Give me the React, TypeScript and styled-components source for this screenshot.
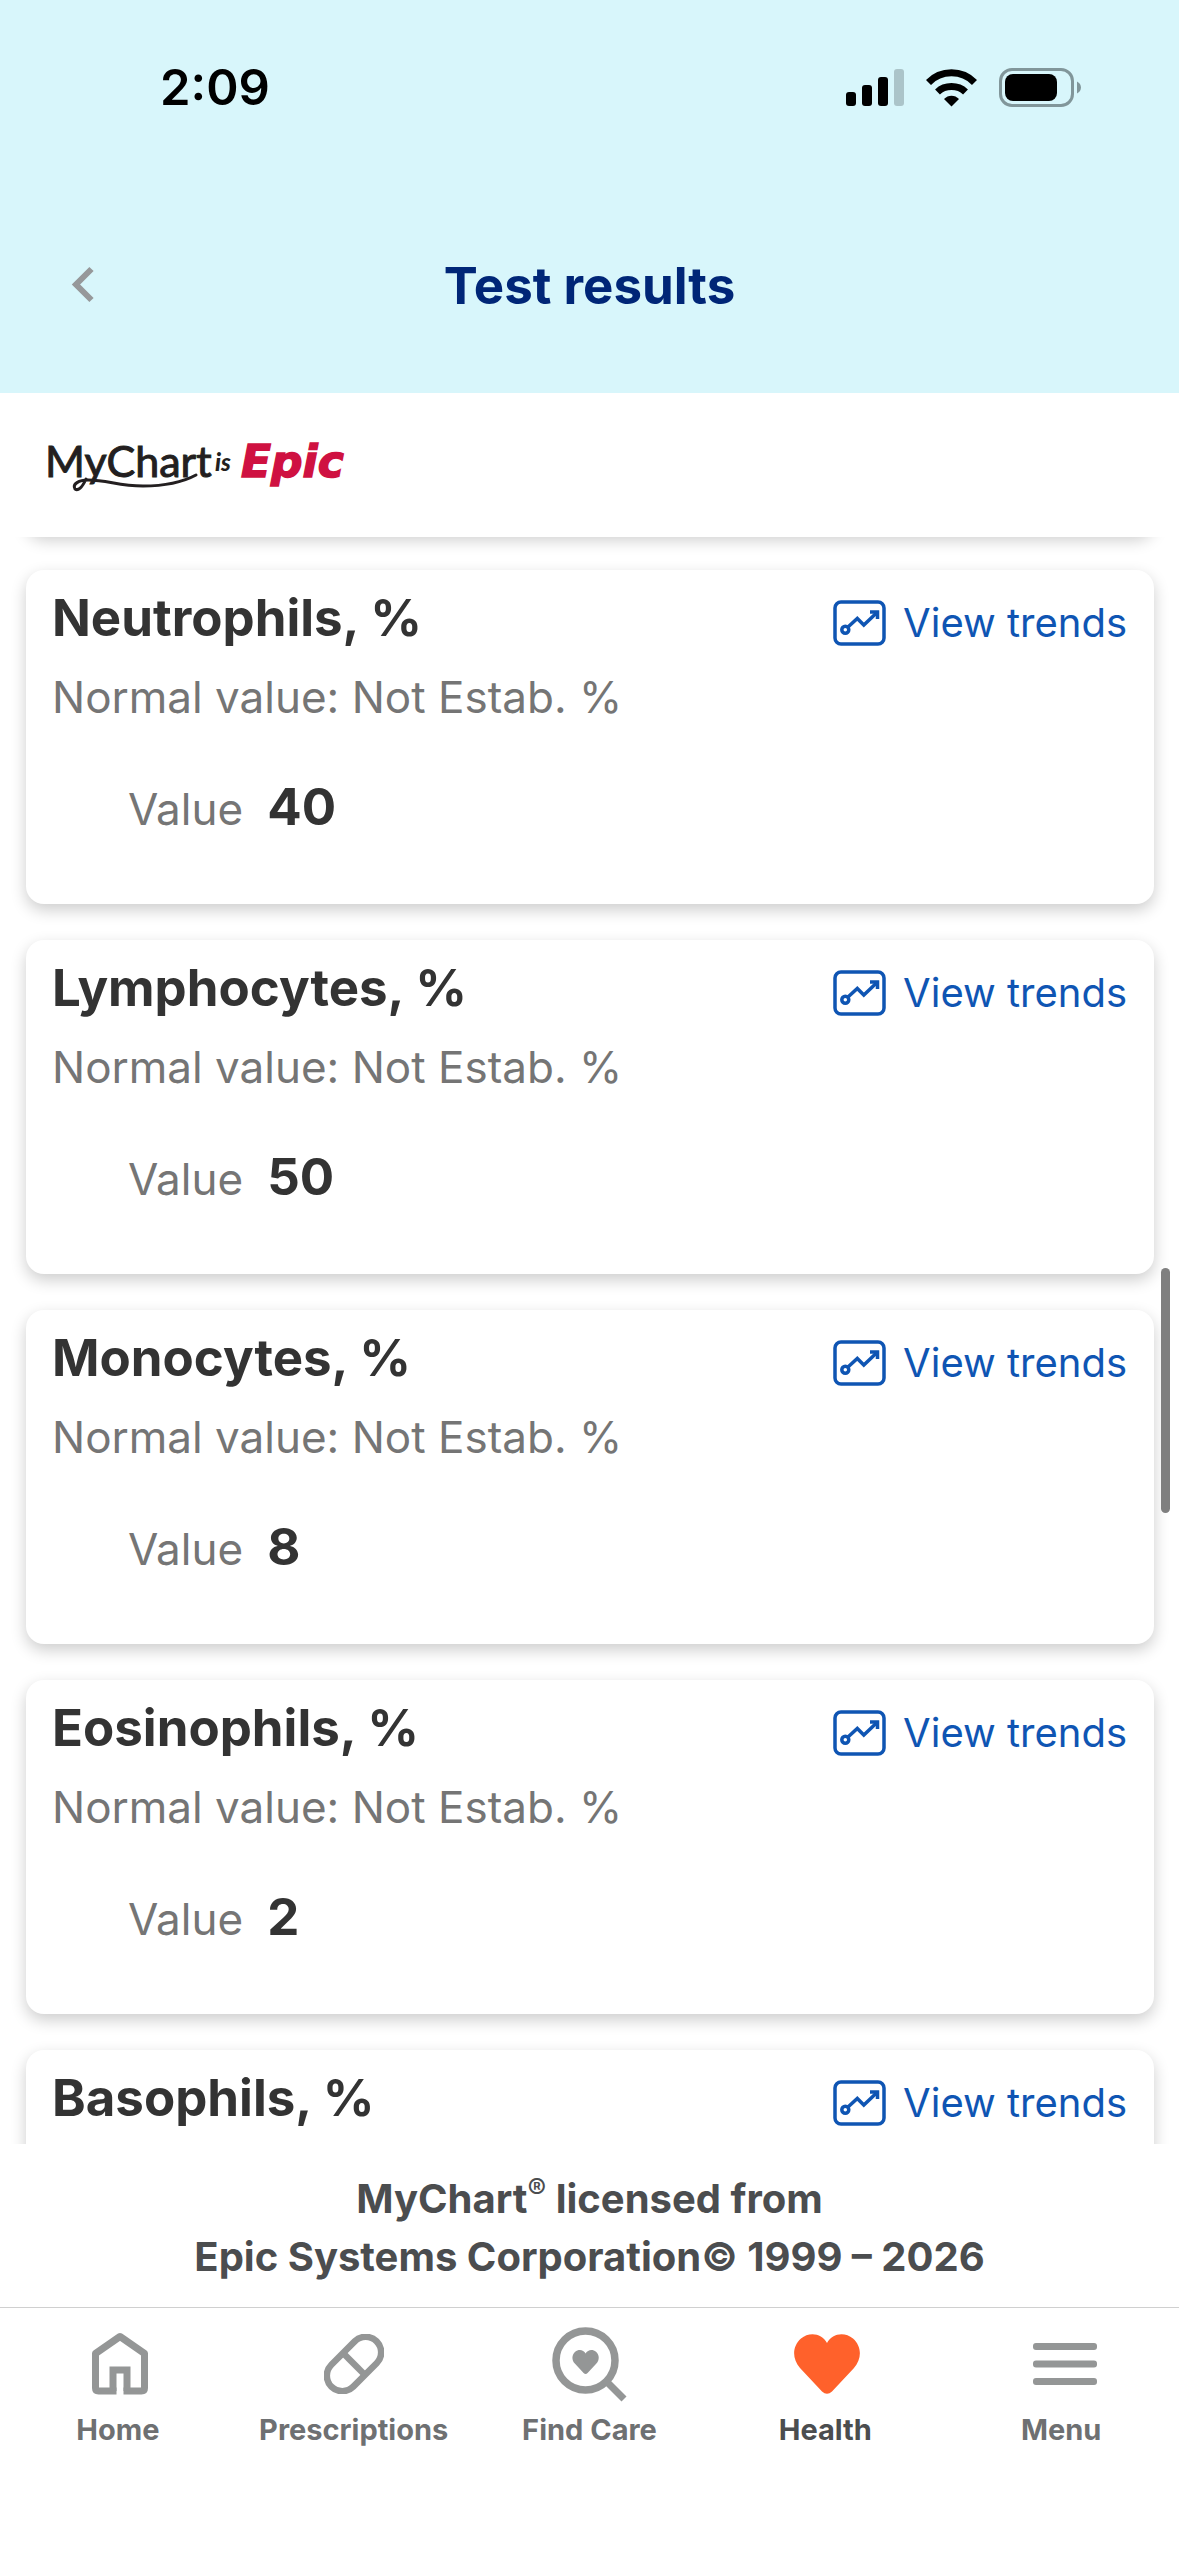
import React from 'react';
import styled, { createGlobalStyle } from 'styled-components';

const GlobalStyle = createGlobalStyle`
  *, *::before, *::after { box-sizing: border-box; }
  html, body, #root { height: 100%; }
  body { margin: 0; background: #fff; font-family: Inter, "Liberation Sans", sans-serif; }
  h1, h2, p, dl, dt, dd, ul { margin: 0; padding: 0; }
  button { border: 0; padding: 0; background: none; font: inherit; color: inherit; }
  a { color: inherit; text-decoration: none; }
  svg { display: block; flex: none; }
`;

const Screen = styled.div`
  display: flex;
  flex-direction: column;
  height: 100vh;
  overflow: hidden;
`;

const Header = styled.header`
  flex: none;
  background: #d8f6fb;
`;

const StatusBar = styled.div`
  display: flex;
  align-items: center;
  justify-content: space-between;
  height: 176px;
  padding: 0 97px 0 160px;
`;

const Time = styled.span`
  font-size: 49px;
  line-height: 60px;
  font-weight: 600;
  color: #000;
`;

const StatusIcons = styled.div`
  display: flex;
  align-items: center;
  gap: 22px;
`;

const TitleBar = styled.div`
  display: grid;
  grid-template-columns: 120px 1fr 120px;
  align-items: center;
  height: 217px;
`;

const BackButton = styled.button`
  display: flex;
  padding-left: 70px;
`;

const Title = styled.h1`
  padding-top: 2px;
  font-size: 51px;
  line-height: 60px;
  font-weight: 700;
  color: #002677;
  text-align: center;
`;

const BrandBar = styled.div`
  flex: none;
  display: flex;
  align-items: center;
  height: 144px;
  padding-left: 46px;
`;

const Results = styled.main`
  position: relative;
  flex: 1;
  min-height: 0;
  overflow: hidden;
`;

const CardList = styled.ul`
  display: flex;
  flex-direction: column;
  gap: 36px;
  margin-top: -337px;
  padding: 0 25px 0 26px;
  list-style: none;
`;

const Card = styled.li`
  height: 334px;
  flex: none;
  padding: 18px 27px 18px 26px;
  border-radius: 18px;
  background: #fff;
  box-shadow: 0 6px 16px rgba(0, 0, 0, 0.2);
`;

const CardHead = styled.div`
  display: flex;
  align-items: flex-start;
  justify-content: space-between;
`;

const TestName = styled.h2`
  font-size: 51px;
  line-height: 60px;
  font-weight: 700;
  color: #333;
`;

const TrendsLink = styled.a`
  display: flex;
  align-items: center;
  gap: 17px;
  font-size: 40px;
  line-height: 70px;
  color: #0f55b3;
`;

const NormalRange = styled.p`
  margin-top: 9px;
  font-size: 44px;
  line-height: 60px;
  color: #757575;
`;

const Reading = styled.dl`
  display: flex;
  align-items: baseline;
  gap: 24px;
  margin-top: 50px;
  padding-left: 76px;
`;

const ReadingLabel = styled.dt`
  font-size: 44px;
  line-height: 60px;
  color: #757575;
`;

const ReadingValue = styled.dd`
  font-size: 51px;
  line-height: 60px;
  font-weight: 700;
  color: #333;
`;

const ScrollThumb = styled.div`
  position: absolute;
  top: 731px;
  right: 9px;
  width: 9px;
  height: 245px;
  border-radius: 5px;
  background: #7f7f7f;
`;

const Licence = styled.footer`
  flex: none;
  height: 164px;
  padding-top: 26px;
  border-bottom: 1px solid #d0d0d0;
  text-align: center;
  font-size: 40px;
  line-height: 58px;
  font-weight: 700;
  color: #4b4d4f;
`;

const Registered = styled.sup`
  font-size: 28px;
  line-height: 0;
  font-weight: 500;
`;

const TabBar = styled.nav`
  flex: none;
  display: grid;
  grid-template-columns: repeat(5, 1fr);
  height: 248px;
  padding-top: 17px;
`;

const Tab = styled.a<{ $active?: boolean }>`
  display: flex;
  flex-direction: column;
  align-items: center;
  font-size: 29px;
  line-height: 40px;
  font-weight: 700;
  color: ${({ $active }) => ($active ? '#4b4d4f' : '#6e7072')};
`;

const TabIcon = styled.span`
  display: flex;
  align-items: center;
  justify-content: center;
  height: 78px;
  margin-bottom: 7px;
`;

const SignalIcon = () => (
  <svg width="58" height="38" viewBox="0 0 58 38" aria-hidden="true">
    <rect x="0" y="23" width="10" height="14" rx="3" />
    <rect x="16" y="16" width="10" height="21" rx="3" />
    <rect x="32" y="8" width="10" height="29" rx="3" />
    <rect x="48" y="0" width="10" height="37" rx="3" fill="#abc4c9" />
  </svg>
);

const WifiIcon = () => (
  <svg width="51" height="38" viewBox="0 0 51 38" aria-hidden="true">
    <path d="M25.500 37.500L18 30C22 25.500 29 25.500 33 30Z" />
    <path d="M11.500 23C19 15.800 32 15.800 39.500 23" fill="none" stroke="#000" strokeWidth="7" />
    <path d="M2.500 13.500C15 .600 36 .600 48.500 13.500" fill="none" stroke="#000" strokeWidth="7" />
  </svg>
);

const BatteryIcon = () => (
  <svg width="83" height="40" viewBox="0 0 83 40" aria-hidden="true">
    <rect x="1.500" y="1.500" width="72" height="36" rx="11.500" fill="none" stroke="#81969a" strokeWidth="3" />
    <rect x="6" y="6" width="52" height="27" rx="8" />
    <path d="M78 13.500C83.300 16 83.300 23 78 25.500Z" fill="#81969a" />
  </svg>
);

const ChevronIcon = () => (
  <svg width="26" height="38" viewBox="0 0 26 38" fill="none" aria-hidden="true">
    <path d="M21.500 3L6 18.500L21.500 34" stroke="#96989a" strokeWidth="6" />
  </svg>
);

const BrandLogo = () => (
  <svg width="310" height="60" viewBox="0 0 310 60" role="img" aria-label="MyChart is Epic">
    <text x="-1" y="42" fontFamily="Lato, sans-serif" fontSize="43" fill="#231f20" stroke="#231f20" strokeWidth="1">
      MyChart
    </text>
    <path
      d="M40 44C36 53 32 56 29 54C26 49 33 45 42 45C62 45 72 51 97 51C120 51 137 47 150 40"
      fill="none"
      stroke="#231f20"
      strokeWidth="3"
      strokeLinecap="round"
    />
    <text x="169" y="36" fontFamily="Lato, sans-serif" fontSize="24" fontWeight="900" fontStyle="italic" fill="#231f20">
      is
    </text>
    <text
      x="195"
      y="42"
      fontFamily="DejaVu Sans, sans-serif"
      fontSize="44"
      fontWeight="700"
      fontStyle="italic"
      fill="#cf1141"
      stroke="#cf1141"
      strokeWidth="1.500"
    >
      Epic
    </text>
  </svg>
);

const TrendIcon = () => (
  <svg width="53" height="46" viewBox="0 0 53 46" fill="none" stroke="#0f55b3" strokeWidth="3.500" aria-hidden="true">
    <rect x="2" y="2" width="49" height="42" rx="6" />
    <circle cx="12.300" cy="29.700" r="3.500" />
    <path d="M15 27L24.300 18.500L30.800 25L43.500 13" />
    <path d="M37 12H44.500V19" />
  </svg>
);

const HomeIcon = () => (
  <svg width="62" height="64" viewBox="-4 0 62 64" fill="none" stroke="#949696" strokeWidth="7" strokeLinejoin="round" aria-hidden="true">
    <path d="M25.500 59H7.500Q4.500 59 4.500 56V21.500L29 4.500L53.500 21.500V56Q53.500 59 50.500 59H32.500" />
    <path d="M22 59V38H36V59" strokeLinejoin="miter" />
  </svg>
);

const PillIcon = () => (
  <svg width="60" height="60" viewBox="0 0 60 60" fill="none" stroke="#949696" strokeWidth="6.500" aria-hidden="true">
    <g transform="rotate(45 30 30)">
      <rect x="14.500" y="-2" width="31" height="64" rx="15.500" />
      <path d="M14.500 30H45.500" />
    </g>
  </svg>
);

const heartPath = 'M34 9C39-1 52-2.500 60 4.500C69 12.500 69 25 61 34L39 57.500Q34 62 29 57.500L7 34C-1 25-1 12.500 8 4.500C16-2.500 29-1 34 9Z';

const FindCareIcon = () => (
  <svg width="75" height="75" viewBox="0 0 75 75" fill="none" stroke="#949696" aria-hidden="true">
    <circle cx="33.500" cy="33.500" r="29.500" strokeWidth="7.500" />
    <path d="M55.500 55.500L72 72" strokeWidth="7" />
    <path d={heartPath} transform="translate(20 23) scale(.4)" fill="#949696" stroke="none" />
  </svg>
);

const HeartIcon = () => (
  <svg width="71" height="60" viewBox="-3 0 71 60" fill="#ff612b" aria-hidden="true">
    <path d={heartPath} />
  </svg>
);

const MenuIcon = () => (
  <svg width="71" height="42" viewBox="-7 0 71 42" fill="#949696" aria-hidden="true">
    <rect y="0" width="64" height="7" rx="3" />
    <rect y="17.500" width="64" height="7" rx="3" />
    <rect y="35" width="64" height="7" rx="3" />
  </svg>
);

const results = [
  { name: 'Neutrophils, %', value: '40' },
  { name: 'Lymphocytes, %', value: '50' },
  { name: 'Monocytes, %', value: '8' },
  { name: 'Eosinophils, %', value: '2' },
  { name: 'Basophils, %', value: '' },
];

const tabs = [
  { label: 'Home', Icon: HomeIcon },
  { label: 'Prescriptions', Icon: PillIcon },
  { label: 'Find Care', Icon: FindCareIcon },
  { label: 'Health', Icon: HeartIcon, active: true },
  { label: 'Menu', Icon: MenuIcon },
];

export default function App() {
  return (
    <Screen>
      <GlobalStyle />
      <Header>
        <StatusBar>
          <Time>2:09</Time>
          <StatusIcons>
            <SignalIcon />
            <WifiIcon />
            <BatteryIcon />
          </StatusIcons>
        </StatusBar>
        <TitleBar>
          <BackButton type="button" aria-label="Back">
            <ChevronIcon />
          </BackButton>
          <Title>Test results</Title>
        </TitleBar>
      </Header>
      <BrandBar>
        <BrandLogo />
      </BrandBar>
      <Results>
        <CardList>
          <Card />
          {results.map(({ name, value }) => (
            <Card key={name}>
              <CardHead>
                <TestName>{name}</TestName>
                <TrendsLink href="#trends">
                  <TrendIcon />
                  View trends
                </TrendsLink>
              </CardHead>
              {value && (
                <>
                  <NormalRange>Normal value: Not Estab. %</NormalRange>
                  <Reading>
                    <ReadingLabel>Value</ReadingLabel>
                    <ReadingValue>{value}</ReadingValue>
                  </Reading>
                </>
              )}
            </Card>
          ))}
        </CardList>
        <ScrollThumb />
      </Results>
      <Licence>
        <p>
          MyChart<Registered>®</Registered> licensed from
        </p>
        <p>Epic Systems Corporation© 1999 – 2026</p>
      </Licence>
      <TabBar>
        {tabs.map(({ label, Icon, active }) => (
          <Tab key={label} href="#" $active={active} aria-current={active ? 'page' : undefined}>
            <TabIcon>
              <Icon />
            </TabIcon>
            {label}
          </Tab>
        ))}
      </TabBar>
    </Screen>
  );
}
